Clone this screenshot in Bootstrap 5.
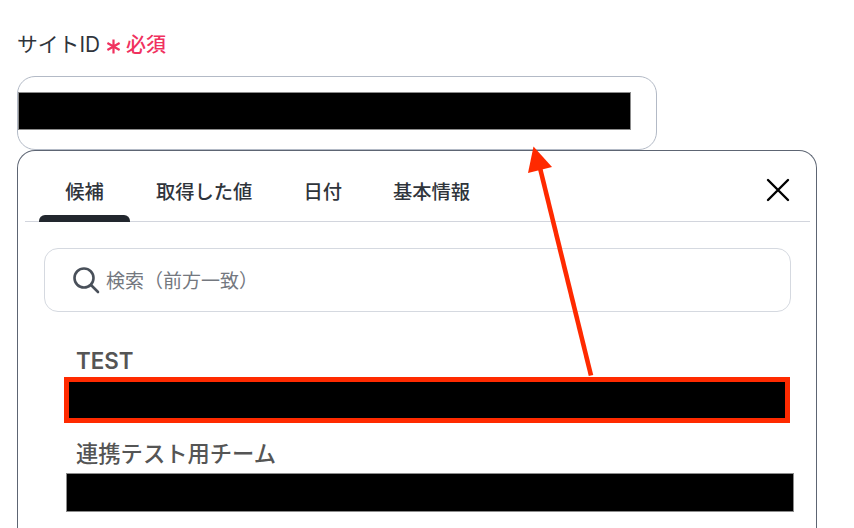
<!DOCTYPE html>
<html lang="ja">
<head>
    <meta charset="UTF-8">
    <meta name="viewport" content="width=device-width, initial-scale=1.0">
    <title>サイトID</title>
    <link href="https://cdn.jsdelivr.net/npm/bootstrap@5.3.0/dist/css/bootstrap.min.css" rel="stylesheet">
    <style>
        html, body { height: 528px; overflow: hidden; }
        body { font-family: "Inter", "Noto Sans CJK JP", sans-serif; background: #fff; color: #2b2f36; }
        .page-wrap { position: relative; height: 528px; padding: 30px 0 0 17px; }
        .field-label { height: 46px; font-size: 20.8px; line-height: 30px; color: #2f343b; white-space: nowrap; }
        .req-mark { color: #f0325f; font-size: 20px; font-weight: 500; margin-left: 6px; }
        .req-mark svg { margin-right: 5px; }
        .site-input { width: 640px; height: 74px; border: 1px solid #b3bac6; border-radius: 18px; padding: 15px 0 0 0; }
        .mask-bar { background: #000; border: 1px solid #8c8c8c; }
        .site-input .mask-bar { width: 613px; height: 38px; }
        .picker { width: 800px; height: 378px; border: 1px solid #5d6573; border-bottom: 0; border-radius: 18px 18px 0 0; padding: 0 6px 0 7px; background: #fff; }
        .tab-row { height: 71px; border-bottom: 1px solid #d2d5dd; }
        .tab-item { position: relative; font-size: 19.3px; line-height: 28px; font-weight: 500; color: #2f343b; padding-top: 27px; height: 70px; text-align: center; white-space: nowrap; }
        .tab-item.on { width: 91px; margin-left: 14px; }
        .tab-item.on::after { content: ""; position: absolute; left: 0; right: 0; bottom: -1px; height: 7px; background: #22272e; border-radius: 6px 6px 0 0; }
        .tab-plain { margin-left: 26px; }
        .tab-gap { margin-left: 51px; }
        .close-x { margin: 26px 19px 0 auto; }
        .search-box { margin: 26px 19px 0 19px; height: 64px; border: 1px solid #d5d9e0; border-radius: 14px; padding-left: 27px; color: #74787f; font-size: 19px; gap: 6px; }
        .search-box span { padding-top: 5px; }
        .opt-list { margin-top: 34px; }
        .opt-name { font-size: 22.3px; line-height: 30px; font-weight: 500; color: #555; padding-left: 51px; white-space: nowrap; }
        .opt-first { font-weight: 600; margin-bottom: 1px; }
        .opt-mask { margin-left: 39px; height: 46px; width: 726px; border: 5px solid #ff2a00; background: #000; }
        .opt-second { margin-top: 16px; }
        .opt-bar { margin-left: 41px; width: 728px; height: 39px; margin-top: 4px; }
        .arrow-layer { position: absolute; left: 0; top: 0; pointer-events: none; }
    </style>
</head>
<body>
    <div class="page-wrap">
        <div class="field-label">サイトID<span class="req-mark"><svg width="15" height="15" viewBox="0 0 15 15" class="align-middle"><path d="M7.5 0.5v14M1.4 4l12.2 7M13.6 4L1.4 11" stroke="#f0325f" stroke-width="2.2" fill="none"/></svg>必須</span></div>
        <div class="site-input"><div class="mask-bar"></div></div>
        <div class="picker">
            <div class="tab-row d-flex">
                <div class="tab-item on">候補</div>
                <div class="tab-item tab-plain">取得した値</div>
                <div class="tab-item tab-gap">日付</div>
                <div class="tab-item tab-gap">基本情報</div>
                <svg class="close-x" width="26" height="26" viewBox="0 0 26 26"><path d="M3 3l20 20M23 3L3 23" stroke="#000" stroke-width="2.4" stroke-linecap="round" fill="none"/></svg>
            </div>
            <div class="search-box d-flex align-items-center">
                <svg width="28" height="28" viewBox="0 0 28 28"><circle cx="12" cy="12" r="9.5" stroke="#49505a" stroke-width="2.6" fill="none"/><path d="M19 19l7 7" stroke="#49505a" stroke-width="2.6" stroke-linecap="round"/></svg>
                <span>検索（前方一致）</span>
            </div>
            <div class="opt-list">
                <div class="opt-name opt-first">TEST</div>
                <div class="opt-mask"></div>
                <div class="opt-name opt-second">連携テスト用チーム</div>
                <div class="mask-bar opt-bar"></div>
            </div>
        </div>
        <svg class="arrow-layer" width="854" height="528" viewBox="0 0 854 528">
            <path d="M591 375.500L540 168" stroke="#ff2a00" stroke-width="4.6" fill="none"/>
            <path d="M533.500 146.500L552 167L528 173Z" fill="#ff2a00"/>
        </svg>
    </div>
</body>
</html>
